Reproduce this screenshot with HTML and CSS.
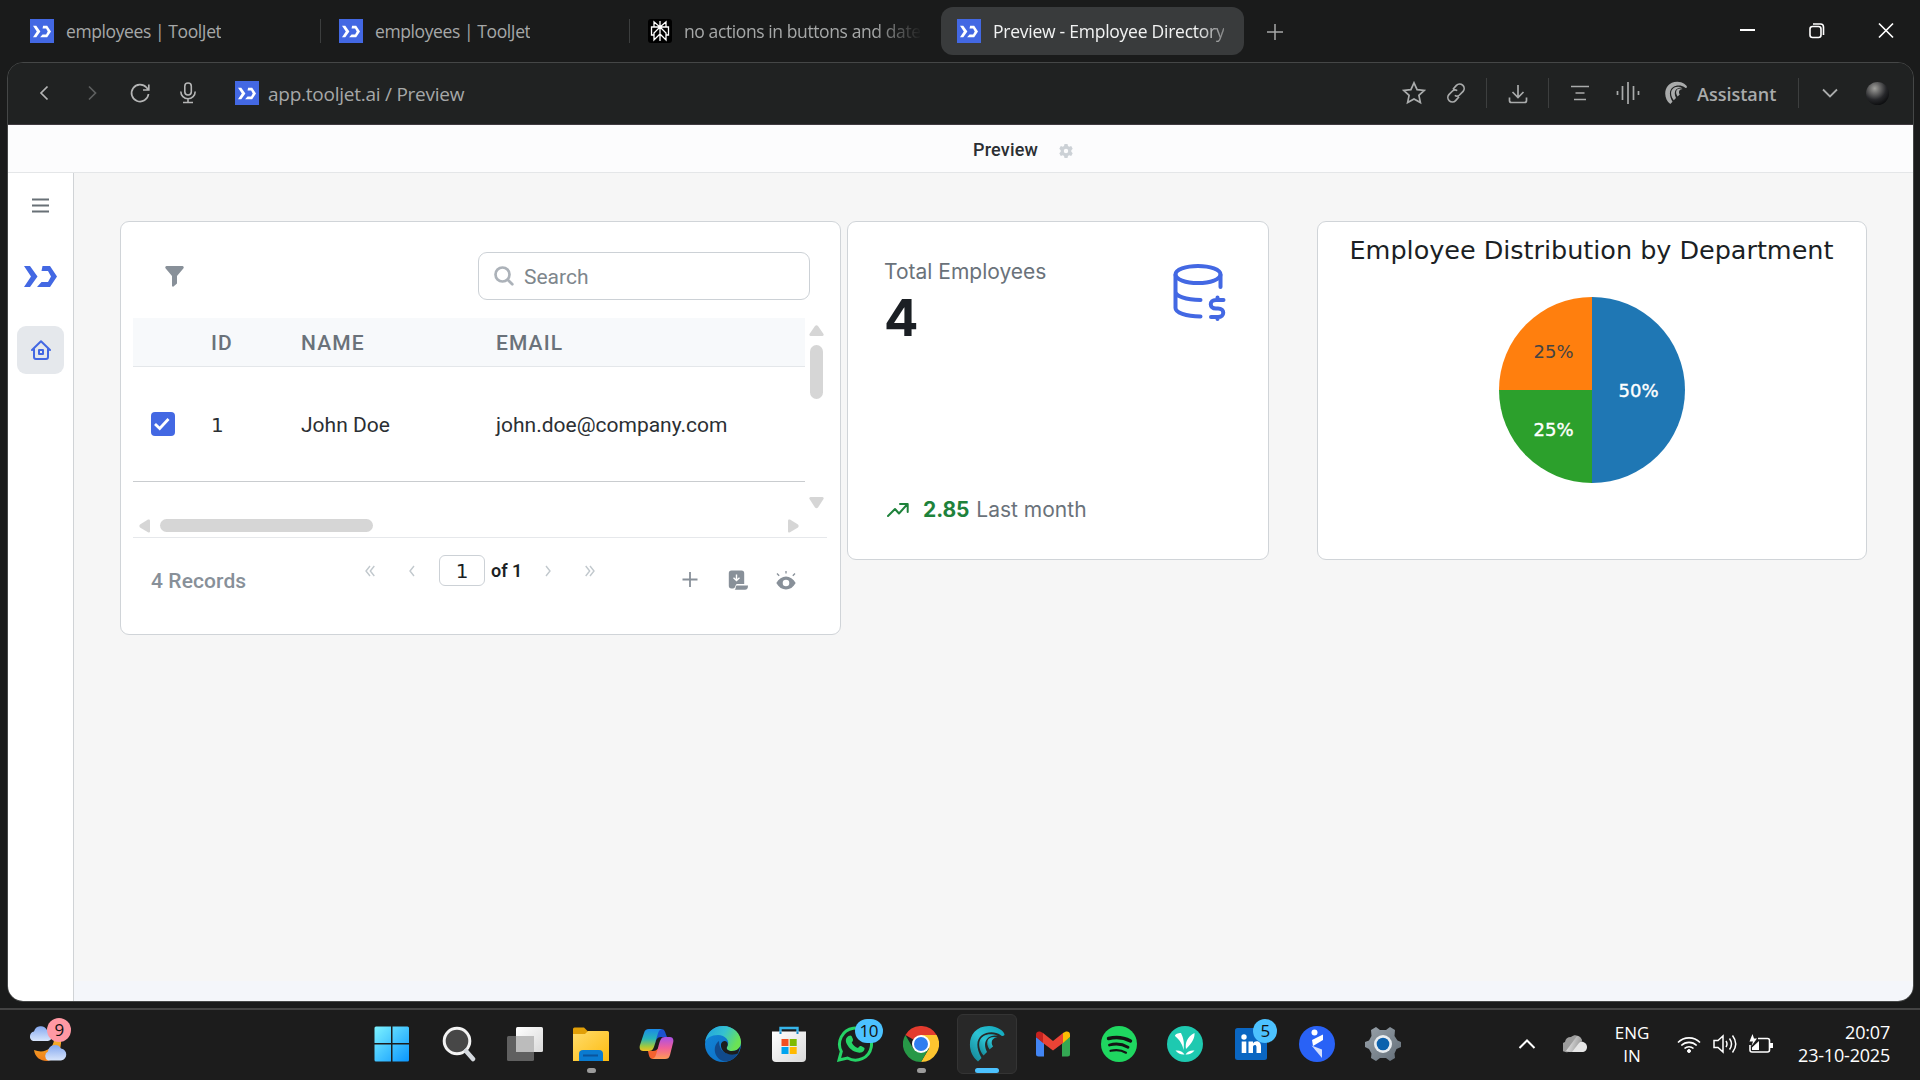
FILE: index.html
```html
<!DOCTYPE html>
<html lang="en">
<head>
<meta charset="utf-8">
<title>Preview - Employee Directory</title>
<link rel="stylesheet" href="styles.css">
</head>
<body>
<svg class="defs" aria-hidden="true">
  <symbol id="tooljet" viewBox="0 0 33 21"><path d="M0 0h6l7.500 10.500L6 21H0l7-10.500zM18.500 0H26l7 10.500L26 21H13l4.500-5H24l3-5.500L24 5h-6.500z"/></symbol>
  <linearGradient id="gWin" x1="0" y1="0" x2="1" y2="1"><stop offset="0" stop-color="#7df3ff"/><stop offset="1" stop-color="#0a96ff"/></linearGradient>
  <linearGradient id="gFold" x1="0" y1="0" x2="1" y2="1"><stop offset="0" stop-color="#ffdc6b"/><stop offset="1" stop-color="#fdbb0f"/></linearGradient>
  <linearGradient id="gCloud" x1="0" y1="0" x2="0" y2="1"><stop offset="0" stop-color="#84a8ef"/><stop offset="1" stop-color="#d8e5fb"/></linearGradient>
  <linearGradient id="gMoon" x1="0" y1="0" x2="0" y2="1"><stop offset="0" stop-color="#f5b62e"/><stop offset="1" stop-color="#f07d1a"/></linearGradient>
  <linearGradient id="gCopA" x1="0" y1="0" x2="0" y2="1"><stop offset="0" stop-color="#1b8ae8"/><stop offset=".45" stop-color="#28b5b8"/><stop offset=".8" stop-color="#a6c93b"/><stop offset="1" stop-color="#f3bf24"/></linearGradient>
  <linearGradient id="gCopB" x1="0" y1="0" x2="0" y2="1"><stop offset="0" stop-color="#a950e8"/><stop offset=".5" stop-color="#f0609a"/><stop offset="1" stop-color="#ff9a55"/></linearGradient>
  <linearGradient id="gEdge" x1="0" y1="0" x2="1" y2=".4"><stop offset="0" stop-color="#1f9fe0"/><stop offset=".55" stop-color="#35c1d0"/><stop offset="1" stop-color="#6be254"/></linearGradient>
  <linearGradient id="gEdge2" x1="0" y1="0" x2="1" y2="1"><stop offset="0" stop-color="#1387d8"/><stop offset="1" stop-color="#0c6cc4"/></linearGradient>
  <linearGradient id="gComet" x1="1" y1="0" x2="0" y2="1"><stop offset="0" stop-color="#0fa5ba"/><stop offset=".5" stop-color="#2cc3d4"/><stop offset="1" stop-color="#12808f"/></linearGradient>
  <linearGradient id="gGear" x1="0" y1="0" x2="1" y2="1"><stop offset="0" stop-color="#9aa3ab"/><stop offset="1" stop-color="#636e78"/></linearGradient>
  <linearGradient id="gGrey" x1="0" y1="0" x2="1" y2="1"><stop offset="0" stop-color="#ffffff"/><stop offset="1" stop-color="#d9d9d9"/></linearGradient>
  <linearGradient id="gDrive" x1="0" y1="0" x2="1" y2=".3"><stop offset="0" stop-color="#f4f4f4"/><stop offset="1" stop-color="#9a9a9a"/></linearGradient>
</svg>

<header class="tabs">
  <div class="tab"><span class="favicon"><svg width="18" height="13"><use href="#tooljet"/></svg></span><span class="tab-title">employees | ToolJet</span></div>
  <div class="tab second"><span class="favicon"><svg width="18" height="13"><use href="#tooljet"/></svg></span><span class="tab-title">employees | ToolJet</span></div>
  <div class="tab third"><span class="favicon dark"><svg width="20" height="22" viewBox="0 0 20 22" fill="none" stroke="#fff" stroke-width="1.300"><path d="M10 1v20M4 7V2l6 5 6-5v5M4 15H1.500V7h17v8H16M10 7l-6 6v7l6-6 6 6v-7z"/></svg></span><span class="tab-title faded">no actions in buttons and date</span></div>
  <div class="tab active"><span class="favicon"><svg width="18" height="13"><use href="#tooljet"/></svg></span><span class="tab-title faded-end">Preview - Employee Directory</span></div>
  <svg class="new-tab" width="16" height="16" stroke="#a6a8a8" stroke-width="1.500"><path d="M8 0v16M0 8h16"/></svg>
  <div class="window-controls">
    <svg width="16" height="18" stroke="#fff" stroke-width="2"><path d="M0 8h15"/></svg>
    <svg width="16" height="18" fill="none" stroke="#fff" stroke-width="1.600"><rect x="1" y="4.500" width="11" height="11" rx="2.500"/><path d="M4 2h7.500a3 3 0 0 1 3 3v8"/></svg>
    <svg width="16" height="18" stroke="#fff" stroke-width="1.700"><path d="M1 1.500l14 14M15 1.500l-14 14"/></svg>
  </div>
</header>

<div class="browser">
  <div class="toolbar">
    <div class="nav-icons">
      <svg width="24" height="24" fill="none" stroke="#b4b5b5" stroke-width="1.700"><path d="M15.500 5.500L9 12l6.500 6.500"/></svg>
      <svg width="24" height="24" fill="none" stroke="#5e6060" stroke-width="1.700"><path d="M9 5.500l6.500 6.500L9 18.500"/></svg>
      <svg width="24" height="24" fill="none" stroke="#b4b5b5" stroke-width="1.700"><path d="M20.500 13a8.500 8.500 0 1 1-2-6.500l2 2.500M20.800 3.500V9H15"/></svg>
      <svg width="24" height="24" fill="none" stroke="#b4b5b5" stroke-width="1.600"><rect x="8.800" y="2" width="6.500" height="12" rx="3.200"/><path d="M4.800 10.500a7.200 7.200 0 0 0 14.400 0M12 18v3.500M7 21.500h10"/></svg>
    </div>
    <span class="favicon"><svg width="18" height="13"><use href="#tooljet"/></svg></span>
    <span class="address">app.tooljet.ai / Preview</span>
    <div class="actions">
      <svg width="24" height="24" fill="none" stroke="#a9abab" stroke-width="1.700"><path d="M12 1.800l3.100 6.800 7.200.8-5.400 5 1.500 7.200-6.400-3.700-6.400 3.700 1.500-7.200-5.400-5 7.200-.8z"/></svg>
      <svg class="link" width="24" height="24" fill="none" stroke="#a9abab" stroke-width="1.700"><path d="M9 8.200l3.400-3.800a4.500 4.500 0 0 1 6.700 6L15.500 14a3.800 3.800 0 0 1-4.700.4M15 15.800l-3.400 3.800a4.500 4.500 0 0 1-6.700-6L8.500 10a3.800 3.800 0 0 1 4.700-.4"/></svg>
      <i class="sep"></i>
      <svg width="24" height="24" fill="none" stroke="#a9abab" stroke-width="1.700"><path d="M12 4v12M6.500 11l5.500 5.500 5.500-5.500M3.500 16.500v3a2 2 0 0 0 2 2h13a2 2 0 0 0 2-2v-3"/></svg>
      <i class="sep"></i>
      <svg width="24" height="24" stroke="#a9abab" stroke-width="1.700"><path d="M3 5.500h18M7.500 12h9M6 18.500h12"/></svg>
      <svg class="wide" width="24" height="24" stroke="#a9abab" stroke-width="1.700"><path d="M1.500 10v4M6.500 5v14M12 1v22M17.500 5v14M22.500 10v4"/></svg>
      <svg class="wide" width="24" height="24" viewBox="-1 -1 38 38" fill="#a9abab"><path d="M9 35.500C-4 26-2 0 20 0c9 0 16 6 15.500 9-1.500 1.500-3 1-4 0C22 2 -1 8 12.500 32z"/><path d="M14.500 29.500C4.500 16 13 4 29 9.500 20 8.500 12.500 14 18 26z"/><path d="M20.500 23.500C15 15 20 9 28.500 11.500c-5 0-7.500 4.500-4.500 9z"/></svg>
      <span class="assistant">Assistant</span>
      <i class="sep"></i>
      <svg width="24" height="24" fill="none" stroke="#a9abab" stroke-width="1.800"><path d="M5 8.500l7 7 7-7"/></svg>
      <span class="avatar"></span>
    </div>
  </div>

  <div class="preview-bar"><span>Preview</span>
    <svg width="14" height="14" viewBox="0 0 14 14"><path fill="#ccd1d6" fill-rule="evenodd" d="M5.500 0h3l.5 2 1.200.7 2-.6L13.700 4.700 12.300 6.200v1.600l1.400 1.500-1.500 2.600-2-.6L9 12l-.5 2h-3L5 12l-1.200-.7-2 .6L.3 9.300 1.700 7.800V6.200L.3 4.700l1.500-2.600 2 .6L5 2zM7 4.800a2.200 2.200 0 1 0 0 4.400 2.200 2.200 0 0 0 0-4.400z"/></svg>
  </div>

  <div class="app">
    <nav class="sidebar">
      <svg class="menu" width="17" height="15" stroke="#687076" stroke-width="2"><path d="M0 1.500h17M0 7.500h17M0 13.500h17"/></svg>
      <svg class="brand" width="33" height="21"><use href="#tooljet"/></svg>
      <a class="home"><svg width="20" height="20" fill="none" stroke="#4368e3" stroke-width="2" stroke-linejoin="round" stroke-linecap="round"><path d="M1 10l9-8.800L19 10M3 9v8a2 2 0 0 0 2 2h10a2 2 0 0 0 2-2V9"/><rect x="8" y="10" width="4" height="4" /></svg></a>
    </nav>

    <main class="canvas">
      <section class="card table-card">
        <div class="table-tools">
          <svg width="19" height="21" viewBox="0 0 19 21"><path fill="#889099" d="M2 0h15a1.500 1.500 0 0 1 1.300 2.500L12 10v7.500L8.500 20.500c-.8.500-1.500 0-1.500-1V10L.7 2.500A1.500 1.500 0 0 1 2 0z"/></svg>
          <label class="search"><svg width="20" height="20" fill="none" stroke="#acb2b9" stroke-width="2.700" stroke-linecap="round"><circle cx="8.500" cy="8.500" r="7"/><path d="M14 14l4.300 4.300"/></svg><span>Search</span></label>
        </div>
        <div class="table-area">
          <div class="table">
            <div class="row head"><span></span><span>ID</span><span>NAME</span><span>EMAIL</span></div>
            <div class="row"><span><i class="check"><svg width="24" height="24" fill="none" stroke="#fff" stroke-width="2.800"><path d="M4 12l4.700 4.500L17.500 7"/></svg></i></span><span class="digit">1</span><span>John Doe</span><span>john.doe@company.com</span></div>
            <div class="hscroll">
              <svg width="12" height="14"><path fill="#d6d6d6" d="M11 1.500v11q0 1.500-2 .8L1 8.500Q-.3 7 1 5.500L9 .6q2-.7 2 .9z"/></svg>
              <i class="hthumb"></i>
              <svg class="right" width="12" height="14"><path fill="#d6d6d6" d="M0 1.500v11q0 1.500 2 .8l8-4.800q1.300-1.500 0-3L2 .6Q0-.1 0 1.500z"/></svg>
            </div>
          </div>
          <div class="vscroll">
            <svg width="15" height="11"><path fill="#d6d6d6" d="M1.500 11h12q1.700-.3 1-2L9 1Q7.500-.5 6 1L.5 9q-.7 1.700 1 2z"/></svg>
            <i class="vthumb"></i>
            <svg class="down" width="15" height="12"><path fill="#d6d6d6" d="M1.500 0h12q1.700.3 1 2L9 10.500q-1.500 1.500-3 0L.5 2q-.7-1.700 1-2z"/></svg>
          </div>
        </div>
        <footer class="table-footer">
          <span class="records">4 Records</span>
          <div class="pager">
            <svg width="10" height="12" fill="none" stroke="#c1c8cd" stroke-width="1.400"><path d="M5 1L1 6l4 5M9.300 1l-4 5 4 5"/></svg>
            <svg class="prev" width="6" height="12" fill="none" stroke="#c1c8cd" stroke-width="1.400"><path d="M5 1L1 6l4 5"/></svg>
            <span class="page-input digit">1</span>
            <b>of 1</b>
            <svg class="next" width="6" height="12" fill="none" stroke="#c1c8cd" stroke-width="1.400"><path d="M1 1l4 5-4 5"/></svg>
            <svg class="last" width="10" height="12" fill="none" stroke="#c1c8cd" stroke-width="1.400"><path d="M.7 1l4 5-4 5M5 1l4 5-4 5"/></svg>
          </div>
          <div class="row-actions">
            <svg width="20" height="20" stroke="#889099" stroke-width="1.800"><path d="M10 2v15M2.500 9.500h15"/></svg>
            <svg width="20" height="20"><path fill="#889099" d="M3.500.5h10a2.700 2.700 0 0 1 2.700 2.700V14H9c-2 0-1 4.500-4 4.500H3.500A2.700 2.700 0 0 1 .8 15.800V3.200A2.700 2.700 0 0 1 3.500.5z"/><path fill="#889099" d="M8.500 15.500H20c0 3-1 4.300-3 4.300H5.500c3 0 1.500-2.500 3-4.300z"/><path fill="none" stroke="#fff" stroke-width="1.400" d="M8.500 4.500V10M5.500 7.800l3 2.700 3-2.700"/></svg>
            <svg width="20" height="20"><path fill="#889099" fill-rule="evenodd" d="M.3 13C5 4.300 15 4.300 19.700 13 15 21.700 5 21.700.3 13zM10 9.700a3.300 3.300 0 1 0 0 6.600 3.300 3.300 0 0 0 0-6.600z"/><path stroke="#889099" stroke-width="1.300" d="M10 1v2.500M1 3.500l2.200 2.300M19 3.500l-2.200 2.300"/></svg>
          </div>
        </footer>
      </section>

      <section class="card stat-card">
        <div class="stat-top">
          <div><div class="stat-label">Total Employees</div><div class="stat-value">4</div></div>
          <svg width="54" height="58" fill="none" stroke="#4368e3" stroke-width="4" stroke-linecap="round"><ellipse cx="25" cy="10.500" rx="22.500" ry="8.500"/><path d="M2.500 11v33c0 4.500 10 8.500 25 8.500M2.500 27.500c0 4.500 10 8.500 25 8.500M47.500 11v12M50.500 36H43c-7 0-7 8.500 0 8.500h2c7 0 7 8.500 0 8.500h-7M44.500 33.500v2M44.500 53.500v1.500"/></svg>
        </div>
        <div class="stat-bottom">
          <svg width="22" height="16" fill="none" stroke="#1e823b" stroke-width="2" stroke-linecap="round" stroke-linejoin="round"><path d="M1 14l7-7 4 4.500L20.500 2M13 2h7.700v8"/></svg>
          <b>2.85</b><span>Last month</span>
        </div>
      </section>

      <section class="card chart-card">
        <h2>Employee Distribution by Department</h2>
        <svg class="pie" width="186" height="186" viewBox="-93 -93 186 186">
          <path fill="#1f77b4" d="M0 0V-93A93 93 0 0 1 0 93z"/>
          <path fill="#2ca02c" d="M0 0V93A93 93 0 0 1-93 0z"/>
          <path fill="#ff7f0e" d="M0 0H-93A93 93 0 0 1 0-93z"/>
          <text x="46.500" y="7" fill="#fff" class="strong">50%</text>
          <text x="-38.500" y="46" fill="#fff" class="strong">25%</text>
          <text x="-38.500" y="-32" fill="#444">25%</text>
        </svg>
      </section>
    </main>
  </div>
</div>

<footer class="taskbar">
  <div class="weather">
    <svg width="44" height="44"><path fill="url(#gMoon)" d="M33 14c1 13-5 22-14 23-7 0-12-4-13-11 10 4 19-1 20-10z"/><path fill="url(#gCloud)" d="M5 17a5 5 0 0 1 1-9.500A7 7 0 0 1 19 6c7 1 7 10 1 11z"/><path fill="url(#gCloud)" d="M20 36.500a5 5 0 0 1 0-9 7 7 0 0 1 13-3c7 1 7 11 0 12z"/></svg>
    <span class="badge pink">9</span>
  </div>
  <div class="pinned">
    <div class="pin"><svg class="start" width="36" height="36"><path fill="url(#gWin)" d="M2 .5h15v16.500H.5V2A1.500 1.500 0 0 1 2 .5zM18.500.5h15A1.500 1.500 0 0 1 35 2v15H18.500zM.5 18.500H17v17H2A1.500 1.500 0 0 1 .5 34zM18.500 18.500H35V34a1.500 1.500 0 0 1-1.500 1.500h-15z"/></svg></div>
    <div class="pin"><svg width="36" height="36" class="shift"><circle cx="15" cy="15" r="12.800" fill="#474747" stroke="#f3f3f3" stroke-width="3"/><path d="M24 25l7 8" stroke="#d5d9de" stroke-width="4.500" stroke-linecap="round"/></svg></div>
    <div class="pin"><svg width="36" height="36"><rect x="9" y="1" width="27" height="25" rx="1.500" fill="url(#gGrey)"/><rect x="0" y="10" width="27" height="25" rx="1.500" fill="#777" opacity=".75"/><path fill="#bcbcbc" d="M9 10h18v16H9z"/></svg></div>
    <div class="pin"><svg width="36" height="36"><path fill="#e19f07" d="M0 3a1.500 1.500 0 0 1 1.500-1.500H11l4 4V9H0z"/><path fill="url(#gFold)" d="M0 8h12l3-3h19.500A1.500 1.500 0 0 1 36 6.500V35H0z"/><path fill="#0a7bd0" d="M6 35V28a4 4 0 0 1 4-4h16a4 4 0 0 1 4 4v7z"/><path stroke="#0a559c" stroke-width="2" d="M10 29.500h15"/></svg><i class="dot"></i></div>
    <div class="pin"><svg width="36" height="36"><path fill="#1b52cf" d="M17 3h5c4 0 4 3 6 8h-6c-4 0-5 3-6 7z"/><path fill="url(#gCopA)" d="M10 3h13c-4 1-4 5-6 11-2 8-3 11-7 11H4c-3 0-4-3-3-6L5 7c1-3 2-4 5-4z"/><path fill="#f5622f" d="M19 33h-5c-4 0-4-4-5-8h5c4 0 6-3 7-7z"/><path fill="url(#gCopB)" d="M26 33H13c4-1 4-5 6-11 2-8 3-11 7-11h5c3 0 4 3 3 6l-3 12c-1 3-2 4-5 4z"/></svg></div>
    <div class="pin"><svg width="36" height="36"><circle cx="18" cy="18" r="18" fill="url(#gEdge2)"/><path fill="url(#gEdge)" d="M0 16C2 6 9 0 18 0c11 0 18 8 18 16 0 6-4 9-9 9-4 0-6-2-5-4 4-6-2-12-9-12C6 9 2 12 0 16z"/><path fill="#114a8c" d="M14 15c-7 5-5 17 4 20 7 1 12-2 15-8-6 3-19 2-19-12z"/><path fill="#1d1d1d" d="M22 21c-1 2 1 4 5 4 4 0 7-2 8.500-5L33 27.500C24 31 15 26 16 18c1-3 4-4 6-2 1 2 1 3 0 5z"/></svg></div>
    <div class="pin"><svg width="36" height="36"><path fill="none" stroke="#36b5ea" stroke-width="2.400" d="M9.500 8V2h17v6"/><path fill="url(#gGrey)" d="M1 5.500h34V32a4 4 0 0 1-4 4H5a4 4 0 0 1-4-4z"/><path fill="none" stroke="#168cc9" stroke-width="2" d="M9.500 5.500V8M26.500 5.500V8"/><path fill="#f25022" d="M10.500 13h7v7h-7z"/><path fill="#7fba00" d="M18.700 13h7v7h-7z"/><path fill="#00a4ef" d="M10.500 21h7v7h-7z"/><path fill="#ffb900" d="M18.700 21h7v7h-7z"/></svg></div>
    <div class="pin"><svg width="36" height="36"><path fill="none" stroke="#25d366" stroke-width="3" d="M2 34l2.300-8.500A16 16 0 1 1 10.500 32z"/><path fill="#25d366" d="M11.500 10c2-1 3-1 4 2 .8 2 1 2.500-.8 4.500 1.500 3 3.500 4.500 6.300 5.500 2-2 2-2.500 4-1.500 3 1.500 3 1.500 2 4-2 3-6 2.500-9.500 1C13 23.500 10 19 9 16c-.8-3 .8-5 2.500-6z"/></svg><span class="badge">10</span></div>
    <div class="pin"><svg width="36" height="36"><path fill="#e33b2e" d="M18 18L2.400 9A18 18 0 0 1 33.600 9H18z"/><path fill="#fdc52f" d="M18 18V9h15.600A18 18 0 0 1 18 36l8-13.500z"/><path fill="#279847" d="M2.400 9l7.800 13.500L18 27l7.800-4.500L18 36A18 18 0 0 1 2.400 9z"/><circle cx="18" cy="18" r="9" fill="#fff"/><circle cx="18" cy="18" r="7" fill="#2f7df0"/></svg><i class="dot"></i></div>
    <div class="pin current"><svg width="36" height="36" fill="url(#gComet)"><path d="M9 35.500C-4 26-2 0 20 0c9 0 16 6 15.500 9-1.500 1.500-3 1-4 0C22 2 -1 8 12.500 32z"/><path d="M14.500 29.500C4.500 16 13 4 29 9.500 20 8.500 12.500 14 18 26z"/><path d="M20.500 23.500C15 15 20 9 28.500 11.500c-5 0-7.500 4.500-4.500 9z"/></svg><i class="bar"></i></div>
    <div class="pin"><svg width="36" height="36"><path fill="#4285f4" d="M1 11l8 6v13.500H3.500A2.500 2.500 0 0 1 1 28z"/><path fill="#34a853" d="M27 17l8-6v17a2.500 2.500 0 0 1-2.500 2.500H27z"/><path fill="#ea4335" d="M8 7l10 8 10-8v10l-10 7.500L8 17z"/><path fill="#c5221f" d="M1 11V8.500C1 5 5 4.500 8 7v10z"/><path fill="#fbbc04" d="M35 11V8.500C35 5 31 4.500 28 7v10z"/></svg></div>
    <div class="pin"><svg width="36" height="36"><circle cx="18" cy="18" r="18" fill="#1fd760"/><path fill="none" stroke="#141414" stroke-linecap="round" stroke-width="3.400" d="M7.500 12.500c8-2 15.500-1 22 2.500"/><path fill="none" stroke="#141414" stroke-linecap="round" stroke-width="2.800" d="M8.500 19c7-2 13-1 18.500 2.200"/><path fill="none" stroke="#141414" stroke-linecap="round" stroke-width="2.200" d="M9.500 24.800c6-1.500 11-.8 15.500 1.900"/></svg></div>
    <div class="pin"><svg width="36" height="36"><circle cx="18" cy="18" r="18" fill="#1ec9b0"/><path fill="#fff" d="M8 10c0-2 3-3 6-3 2.500 5 3.500 10 2.500 17-1-6-4-10-8.500-14zM19 23c-1-6 1-12 8.500-16 .5 5-3 11-8.500 16zM17.500 28.500c-3.500.5-6.500-1-9-4 4-.5 7 1 9 4zM18.500 28.500c3.500.5 6.500-1 9-4-4-.5-7 1-9 4z"/></svg></div>
    <div class="pin"><svg width="36" height="36"><rect x="2" y="2" width="32" height="32" rx="2.500" fill="#0a66c2"/><g fill="#fff"><circle cx="11" cy="11" r="2.700"/><path d="M8.700 15.500h4.600V27H8.700zM15.500 15.500H20v2c2-3.500 8-3 8 3V27h-4.500v-6c0-3-3.500-2.500-3.500 0v6h-4.500z"/></g></svg><span class="badge round">5</span></div>
    <div class="pin"><svg width="36" height="36"><circle cx="18" cy="18" r="18" fill="#2962f6"/><circle cx="15.500" cy="6.500" r="3" fill="#fff"/><path fill="#fff" d="M24 8.500V14l-10 6-1-6z"/><path fill="#fff" opacity=".8" d="M12.500 19.500L23 23.500v8.500z"/></svg></div>
    <div class="pin"><svg width="36" height="36"><path fill="url(#gGear)" d="M11 1l4 3h6l4-3 5 3-.5 6 3 4.500L36 16v5l-4.500 2-2 4.500.5 4.500-5 3-4-3h-6l-4 3-5-3 .5-4.500-2.500-4.500L0 21v-5l4-1.500L6.500 10 6 4z"/><circle cx="18" cy="18" r="9" fill="#e9edf0"/><circle cx="18" cy="18" r="6.300" fill="#0d62ad"/></svg></div>
  </div>
  <div class="tray">
    <svg width="18" height="12" fill="none" stroke="#fff" stroke-width="2"><path d="M1.500 10L9 2.500l7.500 7.500"/></svg>
    <svg class="onedrive" width="24" height="18"><path fill="#9d9d9d" d="M5 17A5 5 0 0 1 2 7a6 6 0 0 1 6-5c5-4 10 0 11 4z"/><path fill="url(#gDrive)" d="M3 16L14 1c3 0 5 3 5 5l-8 11H6z"/><path fill="#e6e6e6" d="M9 17l7-9c3-3 8 0 8 4 0 3-2 5-5 5z"/></svg>
    <span class="lang">ENG<br>IN</span>
    <svg class="wifi" width="24" height="20" fill="none" stroke="#fff" stroke-width="1.600"><path d="M1 8.500a15.500 15.500 0 0 1 22 0M4.300 11.500a11 11 0 0 1 15.400 0M7.500 14.500a6.500 6.500 0 0 1 9 0"/><circle cx="12" cy="17" r="1.500" fill="#fff" stroke-width="1"/></svg>
    <svg width="24" height="20" fill="none" stroke="#fff" stroke-width="1.500"><path d="M1 6.500h4L10 2v16l-5-4.500H1zM13 7q2 3 0 6M16.500 4.500q4 5.500 0 11M19.500 1.500q6.500 8.500 0 17"/></svg>
    <svg width="24" height="20" fill="none" stroke="#fff" stroke-width="1.600"><path d="M9 4.500h9.500a2 2 0 0 1 2 2V16a2 2 0 0 1-2 2H3a2 2 0 0 1-2-2v-5"/><path fill="#fff" stroke="none" d="M21 9h3v5h-3zM3 16v-2.500l7-6.500v9zM3.500 0l-3 7.500H4L2.500 12 8 4.500H5z"/></svg>
    <span class="clock">20:07<br>23-10-2025</span>
  </div>
</footer>
</body>
</html>
```
FILE: styles.css
```css
* { box-sizing: border-box; }
body {
  margin: 0;
  width: 1920px;
  height: 1080px;
  overflow: hidden;
  background: #1a1b1b;
  font-family: Roboto, "Open Sans", sans-serif;
  display: flex;
  flex-direction: column;
}
svg { display: block; flex: none; }
.defs { position: absolute; width: 0; height: 0; }

/* Tab strip */
.tabs {
  height: 62px;
  display: flex;
  align-items: flex-start;
  padding: 7px 26px 0 18px;
  font-family: "Open Sans", sans-serif;
}
.tab {
  height: 48px;
  width: 303px;
  display: flex;
  align-items: center;
  padding: 0 12px;
  gap: 12px;
  color: #a6a8a8;
  position: relative;
}
.tab.second { margin-left: 6px; }
.tab.third { margin-left: 6px; }
.tab.second::before, .tab.third::before {
  content: "";
  position: absolute;
  left: -7px;
  top: 12px;
  width: 1px;
  height: 24px;
  background: #3c3e3e;
}
.tab.active {
  margin-left: 2px;
  padding-left: 16px;
  background: #393b3c;
  border-radius: 12px;
  color: #f2f3f3;
}
.tab.active .tab-title { letter-spacing: -0.25px; }
.tab-title {
  font-size: 17.5px;
  letter-spacing: -0.4px;
  white-space: nowrap;
  overflow: hidden;
}
.faded { width: 238px; -webkit-mask-image: linear-gradient(90deg, #000 80%, transparent); mask-image: linear-gradient(90deg, #000 80%, transparent); }
.faded-end { -webkit-mask-image: linear-gradient(90deg, #000 88%, #0006); mask-image: linear-gradient(90deg, #000 88%, #0006); }
.favicon {
  width: 24px;
  height: 24px;
  flex: none;
  display: flex;
  align-items: center;
  justify-content: center;
  background: #4368e3;
  fill: #fff;
}
.favicon.dark { background: #000; border-radius: 3px; }
.new-tab { margin: 17px 0 0 23px; }
.window-controls { margin-left: auto; display: flex; gap: 53px; padding-top: 15px; }

/* Browser frame */
.browser {
  margin: 0 6px 0 7px;
  height: 940px;
  border: 1px solid #454747;
  border-radius: 16px;
  overflow: hidden;
  display: flex;
  flex-direction: column;
}
.toolbar {
  height: 62px;
  flex: none;
  background: #202222;
  border-bottom: 1px solid #3f3a40;
  display: flex;
  align-items: center;
  padding: 0 24px 1px 24px;
}
.nav-icons { display: flex; gap: 24px; margin-right: 35px; }
.address {
  margin-left: 9px;
  padding-top: 2px;
  font: 19px "Open Sans", sans-serif;
  letter-spacing: -0.25px;
  color: #a6a8a8;
}
.actions { margin-left: auto; display: flex; align-items: center; }
.link { margin-left: 18px; }
.wide { margin-left: 24px; }
.sep { width: 1px; height: 30px; margin: 0 19px 0 18px; background: #3d3f3f; }
.assistant {
  width: 83px;
  margin-left: 9px;
  padding-top: 2px;
  font: 600 18px "Open Sans", sans-serif;
  color: #a9abab;
}
.avatar {
  width: 23px;
  height: 23px;
  margin-left: 24px;
  border-radius: 50%;
  background: radial-gradient(circle at 38% 28%, #a0a09c 0, #666 25%, #26272a 52%, #060708 85%);
}

/* Preview header */
.preview-bar {
  height: 48px;
  flex: none;
  background: #fcfcfd;
  border-bottom: 1px solid #e4e6e8;
  display: flex;
  align-items: center;
  gap: 21px;
  padding: 2px 0 0 965px;
  font-weight: 500;
  font-size: 18px;
  letter-spacing: 0.2px;
  color: #2b2f33;
}
.preview-bar svg { margin-top: 2px; }

.app { flex: 1; display: flex; }
.sidebar {
  width: 66px;
  flex: none;
  background: #fff;
  border-right: 1px solid #d0d3d6;
  display: flex;
  flex-direction: column;
}
.menu { margin: 25px 0 0 24px; }
.brand { margin: 53px 0 0 16px; fill: #4368e3; }
.home {
  width: 47px;
  height: 48px;
  margin: 39px 0 0 9px;
  border-radius: 9px;
  background: #e5e8ec;
  display: flex;
  align-items: center;
  justify-content: center;
}

.canvas {
  flex: 1;
  display: flex;
  align-items: flex-start;
  padding: 48px 0 0 46px;
  background: linear-gradient(#f6f6f6 808px, #f4f6fa 808px);
}
.card {
  flex: none;
  background: #fff;
  border: 1px solid #d0d4d8;
  border-radius: 9px;
}

/* Table */
.table-card { width: 721px; height: 414px; }
.table-tools {
  height: 96px;
  padding: 30px 30px 0 44px;
  display: flex;
  justify-content: space-between;
}
.table-tools > svg { margin-top: 14px; }
.search {
  width: 332px;
  height: 48px;
  border: 1px solid #ccd1d6;
  border-radius: 9px;
  display: flex;
  align-items: center;
  gap: 10px;
  padding: 1px 0 0 15px;
  font-size: 21px;
  color: #7e868c;
}
.search svg { margin-top: -2px; }
.table-area { display: flex; margin-left: 12px; width: 694px; height: 220px; border-bottom: 1px solid #e6e8eb; }
.table { width: 672px; }
.row {
  height: 115px;
  display: grid;
  grid-template-columns: 78px 90px 195px 1fr;
  align-items: center;
  border-bottom: 1px solid #c9cccf;
  font-size: 21px;
  color: #2b2f33;
}
.row > span:not(:first-child) { padding-top: 2px; }
.row.head {
  height: 49px;
  background: #f7f9fb;
  border-bottom-color: #e4e7ea;
  font-weight: 500;
  letter-spacing: 1.1px;
  color: #6a727a;
}
.digit { font-family: "DejaVu Sans", sans-serif; font-size: 20px; }
.check {
  display: block;
  width: 24px;
  height: 24px;
  margin-left: 18px;
  border-radius: 4px;
  background: #4368e3;
}
.hscroll { display: flex; align-items: center; padding: 37px 5px 0 6px; }
.hthumb { width: 213px; height: 13px; margin: -1px 0 0 9px; border-radius: 7px; background: #d6d6d6; }
.hscroll .right { margin-left: auto; }
.vscroll { display: flex; flex-direction: column; align-items: center; padding: 7px 0 0 4px; }
.vthumb { width: 13px; height: 54px; margin-top: 9px; border-radius: 7px; background: #d6d6d6; }
.down { margin-top: 98px; }

.table-footer { display: flex; align-items: flex-start; padding-left: 30px; color: #889099; }
.records { width: 214px; margin-top: 31px; font-weight: 500; font-size: 21px; line-height: 25px; letter-spacing: 0.1px; }
.pager { width: 315px; display: flex; align-items: center; margin-top: 17px; height: 31px; color: #1b1f24; }
.prev { margin-left: 34px; }
.page-input {
  width: 46px;
  height: 31px;
  margin-left: 24px;
  border: 1px solid #ccd1d6;
  border-radius: 6px;
  text-align: center;
  line-height: 30px;
}
.pager b { width: 31px; margin-left: 6px; font-size: 18px; font-weight: 600; white-space: nowrap; }
.next { margin-left: 23px; }
.last { margin-left: 34px; }
.row-actions { display: flex; gap: 28px; margin-top: 32px; }

/* Statistic */
.stat-card {
  width: 422px;
  height: 339px;
  margin-left: 6px;
  padding: 37px 41px 36px 36px;
  display: flex;
  flex-direction: column;
  justify-content: space-between;
  font-family: Inter, sans-serif;
  font-size: 21px;
  color: #6a727a;
}
.stat-top { display: flex; justify-content: space-between; }
.stat-top svg { margin-top: 5px; }
.stat-label { line-height: 26px; }
.stat-value { font-size: 51px; line-height: 62px; margin-top: 2px; font-weight: 700; color: #1b1f24; }
.stat-bottom { display: flex; align-items: center; line-height: 26px; padding-left: 3px; }
.stat-bottom b { margin: 0 7px 0 14px; color: #1e823b; letter-spacing: -0.1px; }

/* Chart */
.chart-card {
  width: 550px;
  height: 339px;
  margin-left: 48px;
  padding-right: 1px;
  display: flex;
  flex-direction: column;
  align-items: center;
  font-family: "DejaVu Sans", sans-serif;
}
.chart-card h2 { margin: 11px 0 0; font-size: 25.5px; line-height: 34px; font-weight: 400; letter-spacing: -0.03px; color: #1b1f24; white-space: nowrap; }
.pie { margin-top: 30px; font-size: 18px; text-anchor: middle; }
.strong { stroke: #fff; stroke-width: 0.4px; }

/* Taskbar */
.taskbar {
  margin-top: 6px;
  height: 72px;
  border-top: 2px solid #434343;
  background: #1c1c1c;
  display: flex;
  align-items: flex-start;
  color: #fff;
  font-family: "Open Sans", sans-serif;
}
.weather { position: relative; width: 360px; padding: 14px 0 0 28px; }
.badge {
  position: absolute;
  right: 5px;
  top: 5px;
  min-width: 24px;
  height: 24px;
  padding: 0 5px;
  border-radius: 12px;
  background: #4cc2ff;
  color: #111;
  font-size: 17px;
  line-height: 24px;
  text-align: center;
  letter-spacing: -0.5px;
}
.badge.pink { left: 47px; top: 8px; right: auto; background: #ff99a4; }
.badge.round { right: 7px; }
.pinned { display: flex; padding-top: 4px; }
.pin { width: 66px; height: 60px; position: relative; display: flex; align-items: center; justify-content: center; }
.pin .shift { margin-left: 2px; }
.pin .start { margin-right: 3px; }
.current::before {
  content: "";
  position: absolute;
  inset: 0 3px;
  border: 1px solid #343434;
  border-radius: 6px;
  background: #282828;
}
.current svg { position: relative; }
.dot, .bar { position: absolute; left: 29px; bottom: 1px; width: 9px; height: 5px; border-radius: 3px; background: #9b9b9b; }
.bar { left: 21px; width: 24px; background: #4cc2ff; }
.tray { margin-left: auto; display: flex; align-items: center; height: 68px; padding-right: 30px; font-size: 18px; line-height: 23px; }
.onedrive { margin-left: 27px; }
.lang { width: 44px; margin-left: 23px; text-align: center; font-size: 17px; }
.wifi { margin-left: 23px; }
.tray svg + svg:not(.onedrive) { margin-left: 12px; }
.clock { width: 96px; margin-left: 21px; text-align: right; letter-spacing: -0.2px; }
```
